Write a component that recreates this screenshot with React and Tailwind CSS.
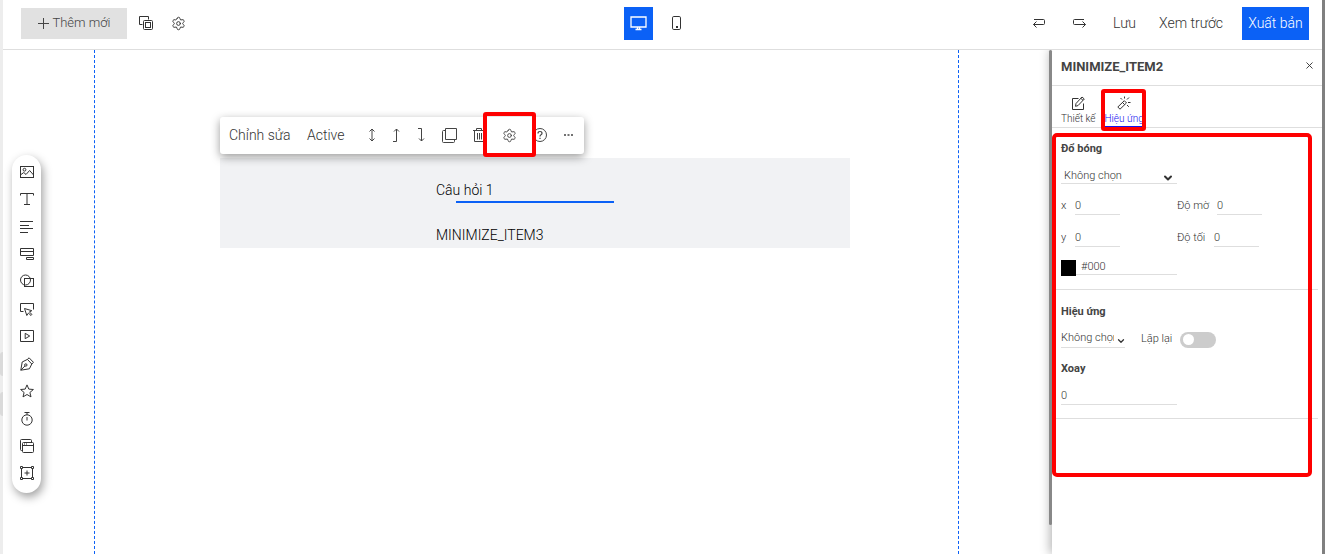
// Landing page editor: top bar, element rail, canvas and effects panel
import React, { useState } from 'react';
import { Settings, Plus, X, ChevronDown } from 'lucide-react';

const Icon = ({ size = 14, children, className = '' }) => (
  <svg width={size} height={size} viewBox={`0 0 ${size} ${size}`} fill="none" stroke="currentColor" strokeWidth="1" className={`shrink-0 ${className}`} aria-hidden="true">
    {children}
  </svg>
);

const RAIL = [
  { name: 'Ảnh', icon: <><rect x="0.5" y="1.5" width="13" height="11" /><circle cx="4.5" cy="4.7" r="1.4" /><path d="M1 9.5l2.8-2 2.2 2 3.6-4 4 4.5" /></> },
  { name: 'Chữ', icon: <path d="M0.5 3.5v-2h13v2M7 1.5v11M4 12.5h6" /> },
  { name: 'Đoạn văn', icon: <path d="M0 1.5h13M0 5.5h9M0 8.5h13M0 12.5h8" /> },
  { name: 'Form', icon: <path d="M0.5 1.5h13v7h-13zM0.5 4.5h13M6.5 10.5h7v2h-7z" /> },
  { name: 'Hình khối', icon: <><circle cx="5.5" cy="6" r="5" /><rect x="4.5" y="4.5" width="9" height="8" /></> },
  { name: 'Nút bấm', icon: <><path d="M3.5 9.5h-3v-8h13v6" /><path d="M4.5 6.5l2.3 7 1.6-2.4 2.6 2.4 1-1-2.6-2.5 2.4-1.3z" /></> },
  { name: 'Video', icon: <path d="M0 1.5h13.5v11H0.5v-11M5.2 4.3v5.4L9.7 7z" /> },
  { name: 'Bút vẽ', icon: <><path d="M0.8 13.2L2.2 5l5.2-2.6 4.4 4.6-2.4 4.8zM7.4 2.4L9.1 0.8l4.4 4.6-1.7 1.6M0.8 13.2l4.2-4.3" /><circle cx="5.8" cy="8" r="1.2" /></> },
  { name: 'Biểu tượng', icon: <path d="M7 0.9l1.8 4.2 4.6.4-3.5 3 1.1 4.4L7 10.5 3 12.9l1.1-4.4-3.5-3 4.6-.4z" /> },
  { name: 'Đếm ngược', icon: <><circle cx="7" cy="8" r="5.2" /><path d="M4.5 0.5h5M7 0.5v2.3M7 5v3.5" /></> },
  { name: 'Popup', icon: <><rect x="2.5" y="3.5" width="11" height="10" rx="1" /><path d="M2.5 6.5h11M2.5 11.5h-1q-1 0-1-1v-9q0-1 1-1h9q1 0 1 1v2M4 5h1M6 5h1" /></> },
  { name: 'Khung', icon: <><path d="M1.5 3v8M12.5 3v8M3 1.5h8M3 12.5h8M7 4.5v5M4.5 7h5" /><path d="M0.5 0.5h2v2h-2zM11.5 0.5h2v2h-2zM0.5 11.5h2v2h-2zM11.5 11.5h2v2h-2z" /></> },
];

const Header = () => (
  <header className="grid grid-cols-[1fr_auto_1fr] items-center h-[50px] border-b border-[#dedede] text-[#333] text-sm font-light pb-[3px]">
    <div className="flex items-center pl-[18px]">
      <button className="flex items-center justify-center gap-[3px] w-[106px] h-[31px] pt-px bg-[#e1e1e1] text-[#444] text-[13px]">
        <Icon size={12} className="mb-[2px]"><path d="M1 6.5h11M6.5 1v11" /></Icon>
        <span>Thêm mới</span>
      </button>
      <button aria-label="Nhân bản trang" className="ml-[11px]">
        <Icon size={16}>
          <path d="M4.5 9.5h-3v-8h9v3" />
          <rect x="5.5" y="5.5" width="9" height="9" rx="1" />
          <rect x="7.5" y="7.5" width="5" height="5" />
        </Icon>
      </button>
      <button aria-label="Cài đặt trang" className="ml-[17px]">
        <Settings size={15} strokeWidth={1.5} />
      </button>
    </div>
    <div className="flex items-center">
      <button aria-label="Máy tính" className="flex items-center justify-center w-[29px] h-[33px] bg-[#0b61f6] text-white">
        <Icon size={17}>
          <path d="M1 2h15v10H1zM7.5 12.5v2.5M9.5 12.5v2.5M5.5 14.5h6" strokeWidth="1.3" />
        </Icon>
      </button>
      <button aria-label="Điện thoại" className="flex items-center justify-center w-12 h-[33px]">
        <Icon size={16}>
          <rect x="3.5" y="1.5" width="8" height="13" rx="1.3" />
          <path d="M7 12h2" strokeWidth="2" />
        </Icon>
      </button>
    </div>
    <div className="flex items-center justify-end pr-[13px]">
      <button aria-label="Hoàn tác" className="mr-[26px]">
        <Icon><path d="M2 3.5h9.5q1 0 1 1v3q0 1-1 1H1.5M4.5 5.5l-3 3 3 3" /></Icon>
      </button>
      <button aria-label="Làm lại" className="mr-[27px]">
        <Icon><path d="M12 3.5H2.5q-1 0-1 1v3q0 1 1 1h11M10.5 5.5l3 3-3 3" /></Icon>
      </button>
      <button className="mr-[23px]">Lưu</button>
      <button className="mr-[19px]">Xem trước</button>
      <button className="w-[67px] h-[33px] bg-[#0b61f6] text-white">Xuất bản</button>
    </div>
  </header>
);

const Rail = () => (
  <nav className="flex flex-col w-[29px] h-[338px] mt-[105px] ml-[9px] pt-[3px] pb-[6px] rounded-full bg-white text-[#333] shadow-[2px_4px_10px_rgba(0,0,0,0.38)]">
    {RAIL.map((item) => (
      <button key={item.name} aria-label={item.name} className="flex-1 flex items-center justify-center">
        <Icon>{item.icon}</Icon>
      </button>
    ))}
  </nav>
);

const ItemToolbar = () => (
  <div className="relative flex items-center w-[364px] h-[37px] px-[9px] pb-px rounded-[3px] bg-white text-[#333] text-sm font-light shadow-[0_3px_10px_rgba(0,0,0,0.4)]">
    <button className="w-[60px] text-left whitespace-nowrap">Chỉnh sửa</button>
    <button className="w-9 ml-[18px] text-left">Active</button>
    <div className="flex items-center gap-[11px] ml-[22px] text-[#444]">
      <button aria-label="Kéo cao"><Icon><path d="M7 1v12M4.5 3.5L7 1l2.5 2.5M4.5 10.5L7 13l2.5-2.5" /></Icon></button>
      <button aria-label="Đưa lên"><Icon><path d="M3 13.5h3.5V1M4 3.5L6.5 1 9 3.5" /></Icon></button>
      <button aria-label="Đưa xuống"><Icon><path d="M3 0.5h3.5V13M4 10.5L6.5 13 9 10.5" /></Icon></button>
      <button aria-label="Nhân bản" className="mx-[2px]"><Icon size={15}><path d="M3.5 0.5h11v11h-11zM3.5 2.5h-2q-1 0-1 1v10q0 1 1 1h10q1 0 1-1v-2" /></Icon></button>
      <button aria-label="Xóa" className="ml-[2px]"><Icon><path d="M1 2.5h12M4.5 2.5v-2h5v2M2.5 2.5v11h9v-11M5.5 5v6.5M7.5 5v6.5M9.5 5v6.5" /></Icon></button>
      <button aria-label="Cài đặt" className="mx-[5px]"><Settings size={15} strokeWidth={1.5} /></button>
      <button aria-label="Trợ giúp">
        <Icon><circle cx="7" cy="7" r="6.5" /><path d="M5 5.5q0-2 2-2t2 1.7q0 1-1 1.5t-1 1.8M7 9.7v1.2" strokeWidth="1.2" /></Icon>
      </button>
      <button aria-label="Thêm" className="ml-[3px]"><Icon><path d="M3 7h2M6.5 7h2M10 7h2" strokeWidth="1.5" /></Icon></button>
    </div>
    <div className="absolute left-[263px] -top-[5px] w-[53px] h-[45px] border-4 border-[#fe0000] rounded-[3px] pointer-events-none"></div>
  </div>
);

const Canvas = () => (
  <main className="flex-1 min-w-0 pt-[67px] pl-[125px] pr-[108px] border-x border-dashed border-[#0b61f6]">
    <ItemToolbar />
    <section className="h-[90px] mt-1 pl-[216px] bg-[#f1f2f4] text-sm font-light text-black">
      <p className="pt-[21px] leading-[22px]">Câu hỏi 1</p>
      <div className="w-[158px] h-[2px] ml-5 bg-[#0b61f6]"></div>
      <p className="pt-[21px] leading-[22px]">MINIMIZE_ITEM3</p>
    </section>
  </main>
);

const Field = ({ id, label, labelClass = '' }) => (
  <div className="flex items-center h-[18px]">
    <label htmlFor={id} className={labelClass}>{label}</label>
    <input id={id} defaultValue="0" className="w-[45px] h-[18px] border-b border-[#dedede] outline-none" />
  </div>
);

const EffectsPanel = () => {
  const [loop, setLoop] = useState(false);

  return (
    <aside className="relative w-[270px] shrink-0 bg-white text-[#333] text-[11px] font-light shadow-[-2px_0_10px_rgba(0,0,0,0.3)]">
      <div className="flex items-center justify-between h-9 pl-[9px] pr-[7px] pb-px border-b border-[#dedede]">
        <h2 className="text-[13px] font-bold text-[#444]">MINIMIZE_ITEM2</h2>
        <button aria-label="Đóng" className="pb-1"><X size={11} strokeWidth={2} /></button>
      </div>
      <div className="flex gap-[9px] h-[42px] pl-[9px] pt-2 border-b border-[#dedede] text-[10px] leading-[13px]">
        <button className="flex flex-col items-center gap-[2px]">
          <Icon className="mt-[2px]"><path d="M7.5 2.5h-6v11h11v-6M5 7.5L11 1l2.3 2L7 9.6l-2.5.7zM9.8 2.3l2.2 2" /></Icon>
          Thiết kế
        </button>
        <button className="flex flex-col items-center gap-[2px] border-b border-[#1212f0] text-[#1212f0]">
          <Icon className="mt-[2px] text-[#333]">
            <path d="M0.8 11l6.5-6.3 2.2 2.2L3 13.2zM5.5 6.5l2.2 2.2" />
            <path d="M7.5 0.5v2M3.5 2l1.5 1.5M12 1.5l-2 2M11 6.5h2.5M10 9l1.8 1.8" />
          </Icon>
          Hiệu ứng
        </button>
      </div>

      <section className="h-[162px] mr-1 pl-[9px] pt-[13px] border-b border-[#dedede]">
        <h3 className="font-bold leading-4 text-[#444]">Đổ bóng</h3>
        <div className="relative w-[116px] mt-3">
          <select aria-label="Đổ bóng" className="block w-full h-[15px] pl-[3px] border-b border-[#dedede] appearance-none outline-none leading-[14px]">
            <option>Không chọn</option>
          </select>
          <ChevronDown size={12} strokeWidth={4} className="absolute right-[3px] top-[3px] pointer-events-none" />
        </div>
        <div className="flex mt-[13px]">
          <div className="w-[116px]"><Field id="shadow-x" label="x" labelClass="w-[14px]" /></div>
          <Field id="shadow-blur" label="Độ mờ" labelClass="w-10" />
        </div>
        <div className="flex mt-[14px]">
          <div className="w-[116px]"><Field id="shadow-y" label="y" labelClass="w-[14px]" /></div>
          <Field id="shadow-dark" label="Độ tối" labelClass="w-[37px]" />
        </div>
        <div className="flex mt-[13px]">
          <span className="w-[15px] h-4 bg-black"></span>
          <input aria-label="Màu bóng" defaultValue="#000" className="w-[101px] h-[15px] pl-[5px] border-b border-[#dedede] outline-none" />
        </div>
      </section>

      <section className="h-[129px] mr-1 pl-[9px] pt-[14px] border-b border-[#dedede]">
        <h3 className="font-bold leading-4 text-[#444]">Hiệu ứng</h3>
        <div className="flex items-center mt-[11px]">
          <div className="relative w-16">
            <select aria-label="Hiệu ứng" className="block w-full h-[17px] pr-[11px] pb-[2px] border-b border-[#dedede] appearance-none outline-none leading-[14px]">
              <option>Không chọn</option>
            </select>
            <ChevronDown size={10} strokeWidth={3} className="absolute -right-px top-[5px] pointer-events-none" />
          </div>
          <label htmlFor="loop" className="ml-4 w-[39px]">Lặp lại</label>
          <input
            id="loop"
            type="checkbox"
            role="switch"
            checked={loop}
            onChange={(e) => setLoop(e.target.checked)}
            className="appearance-none flex items-center w-9 h-4 px-[3px] rounded-full bg-[#ccc] checked:bg-[#0b61f6] before:block before:w-[11px] before:h-[11px] before:rounded-full before:bg-white before:content-[''] checked:before:ml-auto"
          />
        </div>
        <h3 className="mt-[13px] font-bold leading-4 text-[#444]"><label htmlFor="rotate">Xoay</label></h3>
        <input id="rotate" defaultValue="0" className="block w-[116px] h-4 mt-3 border-b border-[#dedede] outline-none" />
      </section>

      <div className="absolute left-[49px] top-[39px] w-[45px] h-[42px] border-4 border-[#fe0000] rounded-[3px] pointer-events-none"></div>
      <div className="absolute left-0 top-[83px] w-[260px] h-[344px] border-4 border-[#fe0000] rounded-[5px] pointer-events-none"></div>
    </aside>
  );
};

export default function App() {
  return (
    <div className="flex min-h-screen overflow-hidden bg-white font-[Roboto,sans-serif]">
      <div className="flex flex-col gap-4 w-[3px] shrink-0 pt-[352px] bg-[#ededed]">
        <span className="h-6 rounded-l-[3px] bg-[#dadada]"></span>
        <span className="h-6 rounded-l-[3px] bg-[#dadada]"></span>
      </div>
      <div className="flex-1 min-w-0 flex flex-col">
        <Header />
        <div className="flex-1 flex overflow-hidden">
          <div className="w-[91px] shrink-0"><Rail /></div>
          <Canvas />
          <div className="w-[90px] shrink-0"></div>
          <div className="relative z-10 w-[3px] shrink-0"><div className="h-[475px] rounded-full bg-[#888]"></div></div>
          <EffectsPanel />
        </div>
      </div>
      <div className="w-[3px] shrink-0 bg-[#808080]"></div>
    </div>
  );
}
